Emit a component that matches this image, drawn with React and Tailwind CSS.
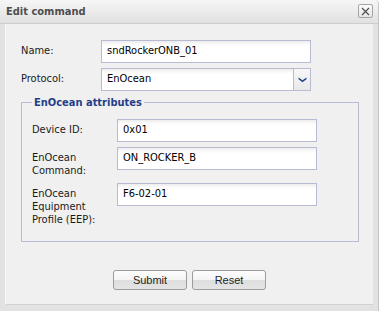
import React from "react";

const font = { fontFamily: '"DejaVu Sans Condensed", "DejaVu Sans", "Liberation Sans", sans-serif' };

function TextInput({ value, width }) {
  return (
    <div
      className={`${width} h-[23px] border border-[#b7bcd2] bg-[linear-gradient(#ececec_0px,#fafafa_3px,#ffffff_6px)] flex items-center pl-[5px] text-[11px] text-black`}
    >
      {value}
    </div>
  );
}

function Row({ label, children, labelW, className = "" }) {
  return (
    <div className={`flex items-start ${className}`}>
      <div className={`${labelW} pt-[4px] leading-[13px] text-[11px] text-[#1a1a1a]`}>{label}</div>
      {children}
    </div>
  );
}

export default function App() {
  return (
    <div
      className="w-[379px] h-[311px] bg-[#e2e2e2] flex flex-col rounded-t-[4px] border-r border-[#c4c4c4] overflow-hidden"
      style={font}
    >
      {/* Title bar */}
      <div className="h-[24px] shrink-0 flex items-center justify-between pl-[6px] pr-[5px] border-b border-[#cdcdcd] bg-[linear-gradient(#f6f6f6,#e1e1e1)]">
        <span className="text-[11px] font-bold text-[#4e4e4e] leading-none mt-[-1px]">Edit command</span>
        <div className="w-[15px] h-[14px] mt-[-1px] rounded-[2px] border border-[#a4a4a4] bg-[linear-gradient(#fbfbfb,#e6e6e6)] flex items-center justify-center">
          <svg width="9" height="9" viewBox="0 0 9 9">
            <path d="M1 1L8 8M8 1L1 8" stroke="#4a4a4a" strokeWidth="1.1" fill="none" />
          </svg>
        </div>
      </div>

      {/* Panel */}
      <div className="flex-1 ml-[5px] mr-[5px] mb-[6px] bg-[#f0f0f0] border-l border-[#f7f7f7] border-b border-b-[#d2d2d2] pl-[15px] pt-[16px] flex flex-col">
        <Row label="Name:" labelW="w-[80px]" className="mb-[5px]">
          <TextInput value="sndRockerONB_01" width="w-[210px]" />
        </Row>
        <Row label="Protocol:" labelW="w-[80px]">
          <div className="w-[210px] h-[23px] border border-[#b7bcd2] flex">
            <div className="flex-1 bg-[linear-gradient(#ececec_0px,#fafafa_3px,#ffffff_6px)] flex items-center pl-[5px] text-[11px] text-black">
              EnOcean
            </div>
            <div className="w-[17px] border-l border-[#b7bcd2] bg-[linear-gradient(#f7f7f7,#e9e9e9)] flex items-center justify-center">
              <svg width="9" height="6" viewBox="0 0 9 6">
                <path d="M0.5 0.5L4.5 3.2L8.5 0.5L8.5 2.3L4.5 5.2L0.5 2.3Z" fill="#23468c" />
              </svg>
            </div>
          </div>
        </Row>

        <fieldset className="mt-[5px] w-[338px] border border-[#b7bcd2] pl-[10px] pr-[10px] pt-[10px] pb-[15px]">
          <legend className="px-[2px] text-[11px] leading-[13px] font-bold text-[#1f3f88]">EnOcean attributes</legend>
          <Row label="Device ID:" labelW="w-[85px]" className="mb-[5px]">
            <TextInput value="0x01" width="w-[200px]" />
          </Row>
          <Row label={<>EnOcean<br />Command:</>} labelW="w-[85px]" className="mb-[6px]">
            <TextInput value="ON_ROCKER_B" width="w-[200px]" />
          </Row>
          <Row label={<>EnOcean<br />Equipment<br />Profile (EEP):</>} labelW="w-[85px]">
            <TextInput value="F6-02-01" width="w-[200px]" />
          </Row>
        </fieldset>

        <div className="mt-[28px] flex justify-center gap-[5px] pr-[15px]">
          {["Submit", "Reset"].map((t) => (
            <button
              key={t}
              className="w-[74px] h-[20px] rounded-[3px] border border-[#9c9c9c] bg-[linear-gradient(#fdfdfd_0%,#f4f4f4_50%,#dedede_52%,#e4e4e4_100%)] text-[11px] text-[#1e1e1e] flex items-center justify-center"
              style={{ fontFamily: '"Liberation Sans", Arial, sans-serif' }}
            >
              {t}
            </button>
          ))}
        </div>
      </div>
    </div>
  );
}
